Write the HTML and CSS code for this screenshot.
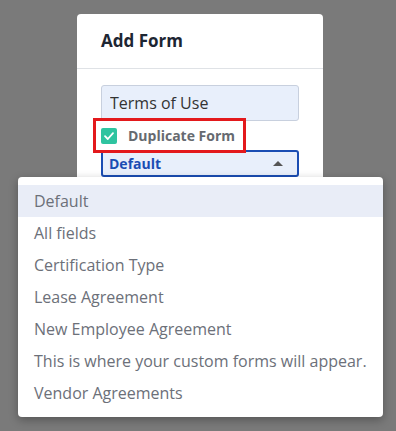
FILE: index.html
```html
<!DOCTYPE html>
<html lang="en">
<head>
    <meta charset="UTF-8">
    <meta name="viewport" content="width=device-width, initial-scale=1.0">
    <title>Add Form</title>
    <link rel="stylesheet" href="styles.css">
</head>
<body>

<div class="modal">
    <div class="modal-header">Add Form</div>
    <div class="modal-body">
        <input type="text" class="name-input" value="Terms of Use">
        <div class="dup-row">
            <span class="check">
                <svg width="16" height="16" viewBox="0 0 16 16">
                    <rect width="16" height="16" rx="2" fill="#2ec4a0"/>
                    <path d="M4 8.2 L6.8 11 L12 5.2" fill="none" stroke="#fff" stroke-width="1.8" stroke-linecap="round" stroke-linejoin="round"/>
                </svg>
            </span>
            <span class="dup-label">Duplicate Form</span>
        </div>
        <div class="select">
            <span>Default</span>
            <span class="caret"></span>
        </div>
    </div>
</div>

<ul class="menu">
    <li class="active">Default</li>
    <li>All fields</li>
    <li>Certification Type</li>
    <li>Lease Agreement</li>
    <li>New Employee Agreement</li>
    <li>This is where your custom forms will appear.</li>
    <li>Vendor Agreements</li>
</ul>

</body>
</html>
```

FILE: styles.css
```css
body {
    margin: 0;
    height: 431px;
    overflow: hidden;
    background: #7a7a7a;
    font-family: "Open Sans", "Liberation Sans", sans-serif;
    position: relative;
}
.modal {
    width: 246px;
    margin: 14px 0 0 77px;
    height: 200px;
    background: #fff;
    border-radius: 4px;
}
.modal-header {
    height: 54px;
    padding-left: 24px;
    line-height: 54px;
    font-size: 17px;
    font-weight: 700;
    color: #1d2633;
    border-bottom: 1px solid #dfe2e6;
}
.modal-body {
    padding: 16px 0 0 24px;
}
.name-input {
    box-sizing: border-box;
    width: 198px;
    height: 36px;
    padding: 0 8px;
    border: 1px solid #c8d0de;
    border-radius: 3px;
    background: #e8effb;
    font-family: inherit;
    font-size: 16px;
    color: #333;
    display: block;
}
.dup-row {
    box-sizing: border-box;
    width: 153px;
    height: 35px;
    margin: -3px 0 0 -8px;
    border: 3px solid #e3191c;
    display: flex;
    align-items: center;
    padding-left: 5px;
    gap: 11px;
    position: relative;
}
.check {
    display: flex;
}
.dup-label {
    font-size: 14px;
    font-weight: 700;
    color: #666a70;
}
.select {
    box-sizing: border-box;
    width: 198px;
    height: 27px;
    margin-top: -3px;
    border: 2px solid #1a4db3;
    border-radius: 3px;
    background: #e8effb;
    display: flex;
    align-items: center;
    justify-content: space-between;
    padding: 0 14px 0 6px;
    font-size: 14px;
    font-weight: 700;
    color: #1a4db3;
}
.caret {
    width: 0;
    height: 0;
    border-left: 5px solid transparent;
    border-right: 5px solid transparent;
    border-bottom: 5px solid #555;
}
.menu {
    position: absolute;
    left: 18px;
    top: 177px;
    width: 365px;
    margin: 0;
    padding: 8px 0;
    list-style: none;
    background: #fff;
    border-radius: 4px;
    box-shadow: 0 3px 10px rgba(0, 0, 0, 0.3);
}
.menu li {
    height: 32px;
    line-height: 32px;
    padding-left: 16px;
    font-size: 16px;
    color: #6c7079;
}
.menu li.active {
    background: #e9edf7;
}
```
